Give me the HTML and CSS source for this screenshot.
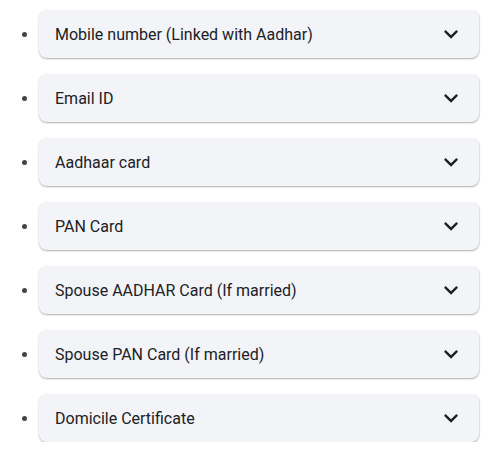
FILE: index.html
```html
<!DOCTYPE html>
<html>
<head>
<meta charset="utf-8">
<link rel="stylesheet" href="styles.css">
</head>
<body>
<ul class="list">
  <li class="item"><div class="card"><span class="label">Mobile number (Linked with Aadhar)</span><svg class="chev" viewBox="0 0 24 24"><path d="M16.59 8.59L12 13.17 7.41 8.59 6 10l6 6 6-6z"/></svg></div></li>
  <li class="item"><div class="card"><span class="label">Email ID</span><svg class="chev" viewBox="0 0 24 24"><path d="M16.59 8.59L12 13.17 7.41 8.59 6 10l6 6 6-6z"/></svg></div></li>
  <li class="item"><div class="card"><span class="label">Aadhaar card</span><svg class="chev" viewBox="0 0 24 24"><path d="M16.59 8.59L12 13.17 7.41 8.59 6 10l6 6 6-6z"/></svg></div></li>
  <li class="item"><div class="card"><span class="label">PAN Card</span><svg class="chev" viewBox="0 0 24 24"><path d="M16.59 8.59L12 13.17 7.41 8.59 6 10l6 6 6-6z"/></svg></div></li>
  <li class="item"><div class="card"><span class="label">Spouse AADHAR Card (If married)</span><svg class="chev" viewBox="0 0 24 24"><path d="M16.59 8.59L12 13.17 7.41 8.59 6 10l6 6 6-6z"/></svg></div></li>
  <li class="item"><div class="card"><span class="label">Spouse PAN Card (If married)</span><svg class="chev" viewBox="0 0 24 24"><path d="M16.59 8.59L12 13.17 7.41 8.59 6 10l6 6 6-6z"/></svg></div></li>
  <li class="item"><div class="card"><span class="label">Domicile Certificate</span><svg class="chev" viewBox="0 0 24 24"><path d="M16.59 8.59L12 13.17 7.41 8.59 6 10l6 6 6-6z"/></svg></div></li>
</ul>
</body>
</html>
```
FILE: styles.css
```css
html, body {
  margin: 0;
  padding: 0;
  background: #ffffff;
}
body {
  font-family: Roboto, "Liberation Sans", sans-serif;
  color: #202124;
}
.list {
  margin: 0;
  padding: 10px 16px 0 39px;
  display: flex;
  flex-direction: column;
  gap: 16px;
}
.item {
  color: #444;
}
.item::marker {
  font-size: 16px;
}
.card {
  height: 48px;
  box-sizing: border-box;
  background: #f3f4f8;
  border-radius: 8px;
  box-shadow: 0 1px 2px rgba(0,0,0,0.28), 1px 1px 1px rgba(0,0,0,0.06);
  display: flex;
  align-items: center;
  justify-content: space-between;
  padding: 0 14px 0 16px;
}
.label {
  font-size: 16px;
  color: #202124;
}
.chev {
  width: 28px;
  height: 28px;
  fill: #202124;
}
```
